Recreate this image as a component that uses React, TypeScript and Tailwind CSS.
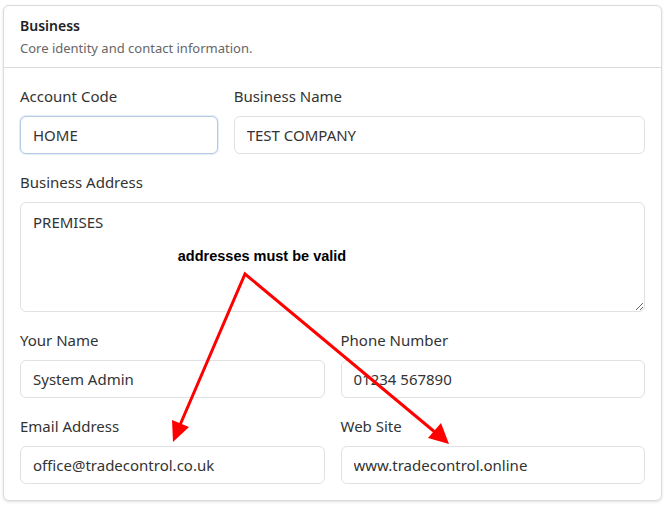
const Field = ({
  label,
  value,
  focused,
  className,
}: {
  label: string;
  value: string;
  focused?: boolean;
  className?: string;
}) => (
  <div className={`flex flex-col gap-2 ${className ?? ""}`}>
    <label className="text-[15px] leading-6 text-[#333]">{label}</label>
    <input
      type="text"
      defaultValue={value}
      className={`h-[38px] w-full rounded-md border bg-white px-3 text-[15px] text-[#333] outline-none ${
        focused ? "border-[#b6cbe6] shadow-[0_0_0_1px_#e3ecf7]" : "border-[#dfe1e5]"
      }`}
    />
  </div>
);

const Arrows = () => (
  <svg
    className="pointer-events-none absolute left-0 top-0"
    width="668"
    height="506"
    viewBox="0 0 668 506"
  >
    <text
      x="262"
      y="261"
      textAnchor="middle"
      fontFamily="Liberation Sans, Arial, sans-serif"
      fontWeight="bold"
      fontSize="14.5"
      fill="#000"
    >
      addresses must be valid
    </text>
    <polyline
      points="180,425 245,274 436,433"
      fill="none"
      stroke="#ff0000"
      strokeWidth="3"
      strokeLinejoin="miter"
    />
    <polygon points="173,442 172,420 189,427" fill="#ff0000" />
    <polygon points="449,444 428,438 441,423" fill="#ff0000" />
  </svg>
);

export default function App() {
  return (
    <div
      className="relative h-[506px] w-[668px] bg-white pl-[3px] pt-[5px]"
      style={{ fontFamily: '"Noto Sans", "Open Sans", sans-serif' }}
    >
      <section className="w-[659px] rounded-md border border-[#d9dbde] bg-white shadow-[0_1px_3px_rgba(0,0,0,0.12)]">
        <header className="border-b border-[#d9dbde] px-4 pb-[9px] pt-2.5">
          <h2 className="text-[14px] font-semibold leading-5 text-[#222]">Business</h2>
          <p className="mt-0.5 text-[13px] leading-5 text-[#666]">
            Core identity and contact information.
          </p>
        </header>
        <form className="grid grid-cols-6 gap-x-4 gap-y-4 p-4">
          <Field label="Account Code" value="HOME" focused className="col-span-2" />
          <Field label="Business Name" value="TEST COMPANY" className="col-span-4" />
          <div className="col-span-6 flex flex-col gap-2">
            <label className="text-[15px] leading-6 text-[#333]">Business Address</label>
            <textarea
              defaultValue="PREMISES"
              className="h-[110px] w-full rounded-md border border-[#dfe1e5] px-3 py-2 text-[15px] text-[#333] outline-none"
            />
          </div>
          <Field label="Your Name" value="System Admin" className="col-span-3" />
          <Field label="Phone Number" value="01234 567890" className="col-span-3" />
          <Field label="Email Address" value="office@tradecontrol.co.uk" className="col-span-3" />
          <Field label="Web Site" value="www.tradecontrol.online" className="col-span-3" />
        </form>
      </section>
      <Arrows />
    </div>
  );
}
